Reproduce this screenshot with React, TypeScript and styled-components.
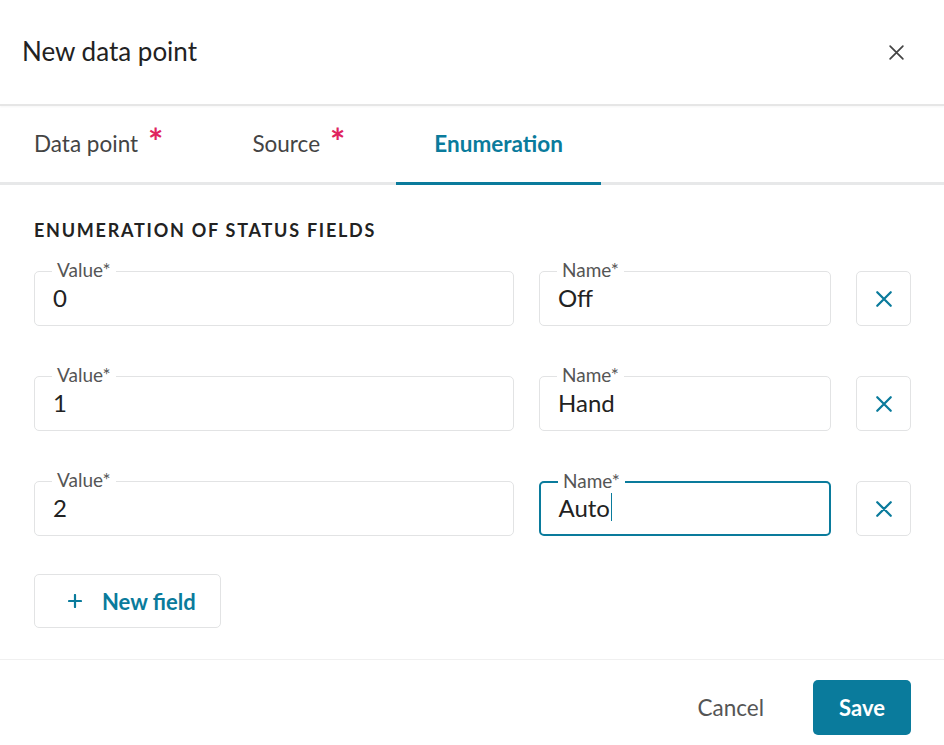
import React from 'react';
import styled, { createGlobalStyle } from 'styled-components';

const teal = '#0a7b9c';

const GlobalStyle = createGlobalStyle`
  html, body {
    margin: 0;
    padding: 0;
    background: #ffffff;
  }
  body {
    font-family: Lato, "Noto Sans", sans-serif;
    color: #222;
  }
`;

const Dialog = styled.div`
  width: 944px;
  height: 745px;
  display: flex;
  flex-direction: column;
  background: #fff;
  overflow: hidden;
`;

const Header = styled.div`
  height: 104px;
  padding: 0 39px 0 22px;
  display: flex;
  align-items: center;
  justify-content: space-between;
  border-bottom: 2px solid #e6e6e6;
  box-shadow: 0 1px 2px rgba(0, 0, 0, 0.04);
`;

const Title = styled.h1`
  margin: 0 0 2px;
  font-size: 26px;
  font-weight: 400;
  color: #222;
`;

const IconButton = styled.button`
  border: none;
  background: none;
  padding: 0;
  display: flex;
  color: #444;
  cursor: pointer;
`;

const TabList = styled.div`
  display: flex;
  gap: 13px;
  border-bottom: 3px solid #e7e8e9;
`;

const Tab = styled.div<{ $active?: boolean; $first?: boolean }>`
  height: 79px;
  box-sizing: border-box;
  padding: 0 38px 2px;
  margin-left: ${p => (p.$first ? '-4px' : '0')};
  margin-bottom: -3px;
  display: flex;
  align-items: center;
  font-size: 22.5px;
  font-weight: ${p => (p.$active ? 700 : 400)};
  color: ${p => (p.$active ? teal : '#444')};
  border-bottom: 3px solid ${p => (p.$active ? teal : 'transparent')};
`;

const Required = styled.span`
  color: #e0245e;
  font-size: 36px;
  line-height: 36px;
  font-weight: 700;
  margin-left: 10px;
  align-self: flex-start;
  margin-top: 17px;
`;

const Body = styled.div`
  padding: 35px 33px 0 34px;
  display: flex;
  flex-direction: column;
`;

const SectionTitle = styled.h2`
  margin: 0 0 31px;
  font-size: 18px;
  line-height: 20px;
  font-weight: 700;
  letter-spacing: 1.75px;
  text-transform: uppercase;
  color: #222;
`;

const Rows = styled.div`
  display: flex;
  flex-direction: column;
  gap: 50px;
`;

const Row = styled.div`
  display: grid;
  grid-template-columns: 1fr 292px 55px;
  gap: 25px;
  align-items: center;
`;

const Field = styled.div<{ $focused?: boolean }>`
  position: relative;
  height: 55px;
  box-sizing: border-box;
  border: ${p => (p.$focused ? `2px solid ${teal}` : '1.5px solid #e2e3e4')};
  border-radius: 5px;
  display: flex;
  align-items: center;
  padding: 0 ${p => (p.$focused ? '17.5px' : '18px')} 3px;
`;

const FieldLabel = styled.span`
  position: absolute;
  top: -12px;
  left: 17px;
  padding: 0 5px;
  background: #fff;
  font-size: 19px;
  line-height: 20px;
  color: #555;
`;

const FieldValue = styled.span`
  font-size: 24px;
  color: #222;
  display: flex;
  align-items: center;
`;

const Caret = styled.span`
  display: inline-block;
  width: 1.5px;
  height: 28px;
  background: ${teal};
  margin-left: 1px;
`;

const RemoveButton = styled.button`
  width: 55px;
  height: 55px;
  box-sizing: border-box;
  border: 1.5px solid #e2e3e4;
  border-radius: 5px;
  background: #fff;
  color: ${teal};
  display: flex;
  align-items: center;
  justify-content: center;
  padding: 0;
  cursor: pointer;
`;

const AddButton = styled.button`
  margin-top: 38px;
  width: 187px;
  height: 54px;
  box-sizing: border-box;
  border: 1.5px solid #e2e3e4;
  border-radius: 5px;
  background: #fff;
  color: ${teal};
  display: flex;
  align-items: center;
  gap: 20px;
  padding: 0 0 0 33px;
  font-family: Lato, "Noto Sans", sans-serif;
  font-size: 22px;
  font-weight: 700;
  cursor: pointer;
`;

const Footer = styled.div`
  margin-top: 31px;
  border-top: 1px solid #f0f0f0;
  padding: 20px 33px 0 0;
  display: flex;
  justify-content: flex-end;
  align-items: center;
  gap: 49px;
`;

const CancelButton = styled.button`
  border: none;
  background: none;
  padding: 0;
  font-family: Lato, "Noto Sans", sans-serif;
  font-size: 22.5px;
  color: #555;
  cursor: pointer;
`;

const SaveButton = styled.button`
  width: 98px;
  height: 55px;
  border: none;
  border-radius: 5px;
  background: ${teal};
  color: #fff;
  font-family: Lato, "Noto Sans", sans-serif;
  font-size: 22px;
  font-weight: 700;
  cursor: pointer;
`;

const CloseIcon = ({ size, width }: { size: number; width: number }) => (
  <svg width={size} height={size} viewBox="0 0 16 16" fill="none" stroke="currentColor" strokeWidth={width} strokeLinecap="round">
    <path d="M2 2L14 14M14 2L2 14" />
  </svg>
);

const PlusIcon = () => (
  <svg width="14" height="14" viewBox="0 0 14 14" fill="none" stroke="currentColor" strokeWidth="2.2" strokeLinecap="round">
    <path d="M7 1V13M1 7H13" />
  </svg>
);

const entries = [
  { value: '0', name: 'Off' },
  { value: '1', name: 'Hand' },
  { value: '2', name: 'Auto', focused: true },
];

export default function App() {
  return (
    <Dialog>
      <GlobalStyle />
      <Header>
        <Title>New data point</Title>
        <IconButton aria-label="Close">
          <CloseIcon size={17} width={1.6} />
        </IconButton>
      </Header>

      <TabList>
        <Tab $first>
          Data point<Required>*</Required>
        </Tab>
        <Tab>
          Source<Required>*</Required>
        </Tab>
        <Tab $active>Enumeration</Tab>
      </TabList>

      <Body>
        <SectionTitle>Enumeration of status fields</SectionTitle>
        <Rows>
          {entries.map(entry => (
            <Row key={entry.value}>
              <Field>
                <FieldLabel>Value*</FieldLabel>
                <FieldValue>{entry.value}</FieldValue>
              </Field>
              <Field $focused={entry.focused}>
                <FieldLabel>Name*</FieldLabel>
                <FieldValue>
                  {entry.name}
                  {entry.focused && <Caret />}
                </FieldValue>
              </Field>
              <RemoveButton aria-label="Remove">
                <CloseIcon size={18} width={2} />
              </RemoveButton>
            </Row>
          ))}
        </Rows>
        <AddButton>
          <PlusIcon />
          New field
        </AddButton>
      </Body>

      <Footer>
        <CancelButton>Cancel</CancelButton>
        <SaveButton>Save</SaveButton>
      </Footer>
    </Dialog>
  );
}
